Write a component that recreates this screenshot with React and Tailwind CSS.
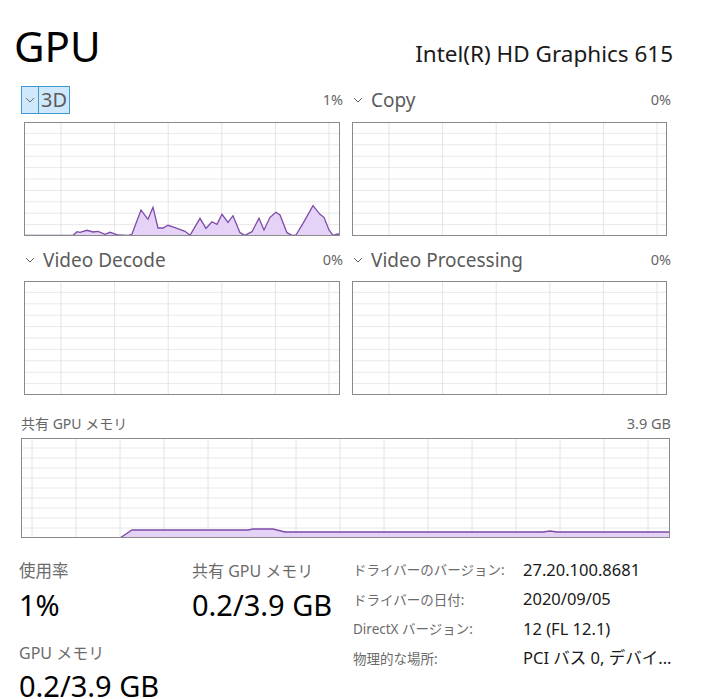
import React from "react";

const FONT = { fontFamily: '"Noto Sans", "Noto Sans CJK JP", sans-serif' };

const chart1 = [
  [0, 113.5], [49, 113.5], [53, 109.7], [56, 110.3], [63, 108.3], [69, 110], [74, 109.3], [81, 112.3],
  [86, 110.3], [94, 113], [104, 113.5], [108, 112], [117, 88], [124, 97.3], [129, 85.3], [134, 106],
  [139, 106], [144, 103.3], [151, 105.7], [161, 109.3], [166, 113.3], [176, 96.3], [182, 106.3],
  [188, 99.7], [193, 102.3], [198, 92.3], [204, 100.3], [209, 93.7], [216, 110.7], [221, 113.3],
  [228, 109.7], [235, 96.3], [240, 108], [246, 95.3], [252, 90.3], [256, 93], [263, 110.7],
  [268, 113.3], [272, 113], [279, 101.3], [289, 83.7], [296, 92.3], [300, 95.3], [305, 108],
  [309, 113.3], [314, 112], [316, 112],
];

const shared = [
  [0, 100], [99, 100], [111, 92], [227, 92], [232, 91], [252, 91], [264, 94], [522, 94], [529, 93],
  [536, 94], [649, 94],
];

function Chevron() {
  return (
    <svg width="10" height="6" viewBox="0 0 10 6" className="shrink-0">
      <polyline points="1,1 5,5 9,1" fill="none" stroke="#6b6b6b" strokeWidth="1" />
    </svg>
  );
}

function Graph({ w, h, vx, step, rows, data }) {
  const vlines = [];
  for (let x = vx; x < w; x += step) vlines.push(x);
  const hlines = [];
  for (let i = 1; i < rows; i++) hlines.push((h / rows) * i);
  const pts = data ? data.map(([x, y]) => `${x},${y}`).join(" ") : "";
  return (
    <svg width={w} height={h} viewBox={`0 0 ${w} ${h}`} className="block">
      {hlines.map((y) => (
        <line key={"h" + y} x1="0" x2={w} y1={y} y2={y} stroke="#e9e9e9" strokeWidth="1" />
      ))}
      {vlines.map((x) => (
        <line key={"v" + x} x1={x} x2={x} y1="0" y2={h} stroke="#e4e4e4" strokeWidth="1" />
      ))}
      {data && (
        <>
          <polygon points={`${pts} ${w},${h} 0,${h}`} fill="#e4d3f6" />
          <polyline points={pts} fill="none" stroke="#7e4ba8" strokeWidth="1.3" />
        </>
      )}
      <rect x="0.5" y="0.5" width={w - 1} height={h - 1} fill="none" stroke="#8a8a8a" strokeWidth="1" />
    </svg>
  );
}

function Engine({ name, pct, selected, w, data, mt }) {
  return (
    <div className="flex flex-col">
      <div className="flex h-[28px] items-center justify-between">
        {selected ? (
          <div className="-ml-[3px] flex h-[28px] items-stretch border border-[#3f98d2] bg-[#cfe8fc]">
            <div className="flex w-[17px] items-center justify-center border-r border-[#3f98d2]">
              <Chevron />
            </div>
            <span className="px-[2px] text-[20px] leading-[26px] text-[#5c5c5c]">{name}</span>
          </div>
        ) : (
          <div className="flex items-center gap-[8px] pl-[1px]">
            <Chevron />
            <span className="text-[19px] leading-[26px] text-[#5c5c5c]">{name}</span>
          </div>
        )}
        <span className="text-[14.5px] text-[#666]">{pct}</span>
      </div>
      <div className={mt}>
        <Graph w={w} h={114} vx={37} step={53.6} rows={10} data={data} />
      </div>
    </div>
  );
}

function Info({ label, value }) {
  return (
    <>
      <span className="whitespace-nowrap text-[13.5px] text-[#6b6b6b]">{label}</span>
      <span className="whitespace-nowrap text-[16.5px] text-[#1a1a1a]">{value}</span>
    </>
  );
}

export default function App() {
  return (
    <div className="h-[699px] w-[712px] overflow-hidden bg-white" style={FONT}>
      <div className="flex items-baseline justify-between pl-[14px] pr-[39px] pt-[24px]">
        <span className="text-[42px] leading-[43px] text-black">GPU</span>
        <span className="text-[22.5px] text-[#1a1a1a]">Intel(R) HD Graphics 615</span>
      </div>

      <div className="mt-[15px] grid grid-cols-[319px_319px] gap-x-[9px] gap-y-[10px] pl-[24px]">
        <Engine name="3D" pct="1%" selected w={316} data={chart1} mt="mt-[8px]" />
        <Engine name="Copy" pct="0%" w={315} mt="mt-[8px]" />
        <Engine name="Video Decode" pct="0%" w={316} mt="mt-[7px]" />
        <Engine name="Video Processing" pct="0%" w={315} mt="mt-[7px]" />
      </div>

      <div className="mt-[18px] w-[650px] pl-[21px] box-content">
        <div className="flex items-center justify-between text-[14px] text-[#666]">
          <span>共有 GPU メモリ</span>
          <span className="text-[14.5px]">3.9 GB</span>
        </div>
        <div className="mt-[3px] w-[649px]">
          <Graph w={649} h={100} vx={11} step={44} rows={10} data={shared} />
        </div>
      </div>

      <div className="mt-[22px] flex pl-[19px]">
        <div className="flex w-[173px] flex-col">
          <span className="text-[16.5px] leading-[22px] text-[#6b6b6b]">使用率</span>
          <span className="mt-[5px] text-[29px] leading-[36px] text-black">1%</span>
          <span className="mt-[19px] text-[16px] leading-[22px] text-[#6b6b6b]">GPU メモリ</span>
          <span className="mt-[4px] text-[29px] leading-[36px] text-black">0.2/3.9 GB</span>
        </div>
        <div className="flex w-[161px] flex-col">
          <span className="text-[16px] leading-[22px] text-[#6b6b6b]">共有 GPU メモリ</span>
          <span className="mt-[5px] text-[29px] leading-[36px] text-black">0.2/3.9 GB</span>
        </div>
        <div className="-mt-[4px] grid auto-rows-[29.5px] grid-cols-[170px_auto] items-center">
          <Info label="ドライバーのバージョン:" value="27.20.100.8681" />
          <Info label="ドライバーの日付:" value="2020/09/05" />
          <Info label="DirectX バージョン:" value="12 (FL 12.1)" />
          <Info label="物理的な場所:" value="PCI バス 0, デバイ..." />
        </div>
      </div>
    </div>
  );
}
